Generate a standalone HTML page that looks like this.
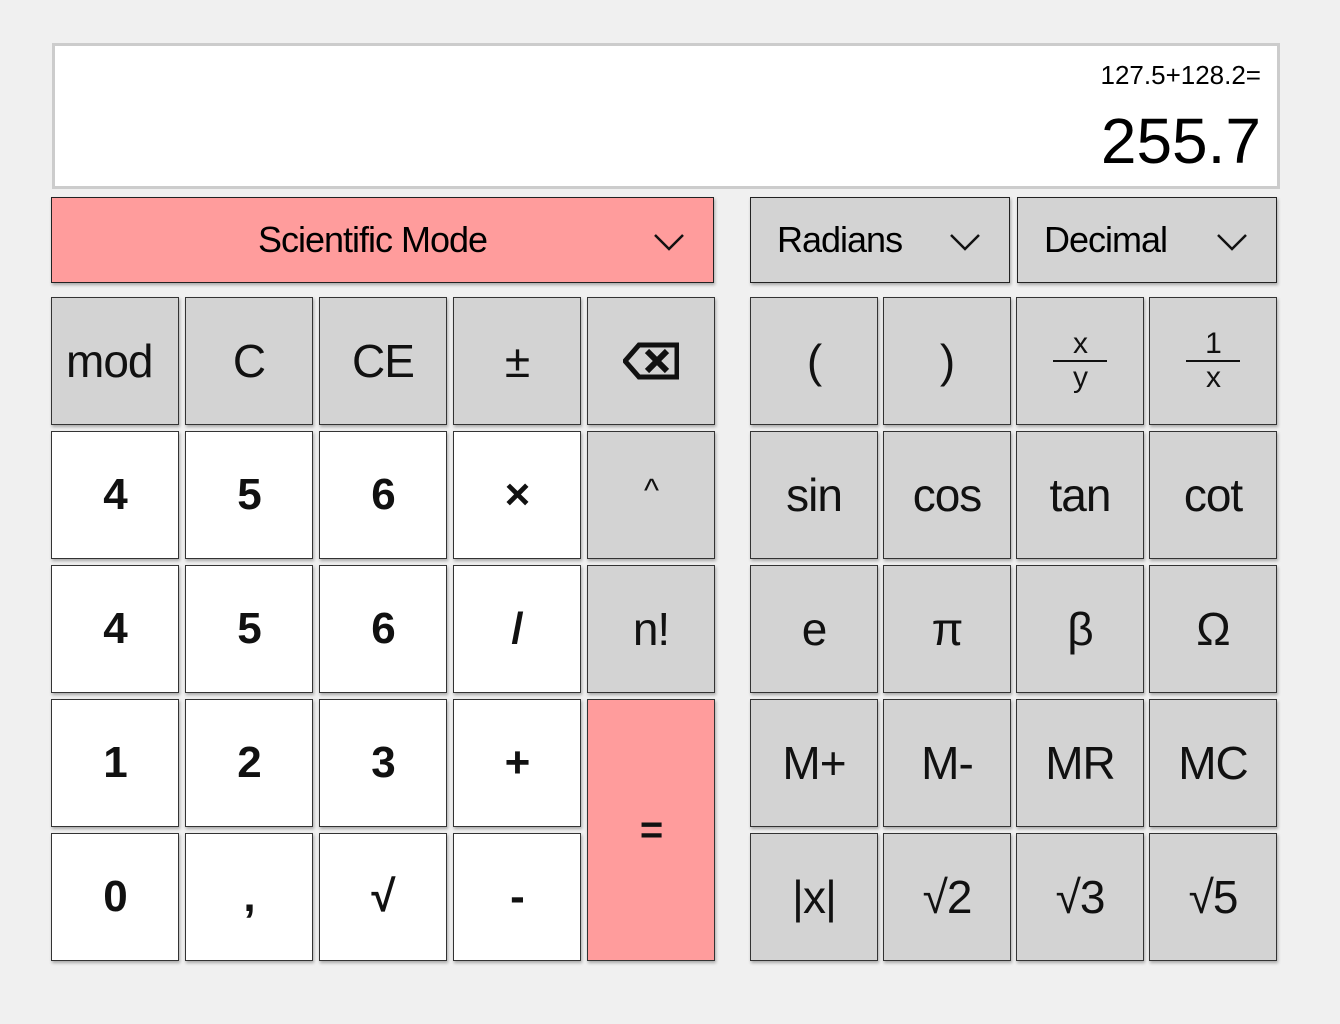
<!DOCTYPE html><html><head><style>
body{margin:0;width:1340px;height:1024px;background:#f0f0f0;font-family:"Liberation Sans",sans-serif;position:relative;overflow:hidden}
.d{position:absolute;left:52px;top:43px;width:1222px;height:140px;background:#fff;border:3px solid #ccc}
.b{position:absolute;width:126px;height:126px;border:1px solid #333;background:#d3d3d3;box-shadow:1px 2px 3px rgba(0,0,0,.3);display:flex;align-items:center;justify-content:center;font-size:46px;color:#111;box-sizing:content-box;letter-spacing:-1px}
.w{background:#fff;font-weight:bold;font-size:44px}
.b.p,.dd.p{background:#ff9c9c}
.dd{position:absolute;top:197px;height:86px;border:1px solid #222;background:#d3d3d3;box-shadow:1px 2px 3px rgba(0,0,0,.3);font-size:36px;display:flex;align-items:center;letter-spacing:-1px}
.dd svg{position:absolute;right:28px;top:35px}
.f{display:flex;flex-direction:column;align-items:center;font-size:30px;line-height:32px}
.f span{border-top:2px solid #111;width:54px;text-align:center}
</style></head><body>
<div class="d"><div style="position:absolute;right:16px;top:14px;font-size:26px">127.5+128.2=</div><div style="position:absolute;right:16px;top:58px;font-size:64px">255.7</div></div>
<div class="dd p" style="left:51px;width:663px;justify-content:center;padding-right:20px;box-sizing:border-box">Scientific Mode<svg width="32" height="18"><path d="M2 2L16 16L30 2" stroke="#111" stroke-width="2.5" fill="none"/></svg></div>
<div class="dd" style="left:750px;width:260px;padding-left:26px;box-sizing:border-box">Radians<svg width="32" height="18"><path d="M2 2L16 16L30 2" stroke="#111" stroke-width="2.5" fill="none"/></svg></div>
<div class="dd" style="left:1017px;width:260px;padding-left:26px;box-sizing:border-box">Decimal<svg width="32" height="18"><path d="M2 2L16 16L30 2" stroke="#111" stroke-width="2.5" fill="none"/></svg></div>

<div class="b" style="left:51px;top:297px;justify-content:flex-start;padding-left:0"><span style="margin-left:14px">mod</span></div>
<div class="b" style="left:185px;top:297px">C</div>
<div class="b" style="left:319px;top:297px">CE</div>
<div class="b" style="left:453px;top:297px">±</div>
<div class="b" style="left:587px;top:297px"><svg width="56" height="38" viewBox="0 0 56 38"><path d="M2 19L16 3H54V35H16Z" stroke="#111" stroke-width="5" fill="none"/><path d="M24 9L44 29M44 9L24 29" stroke="#111" stroke-width="6"/></svg></div>

<div class="b w" style="left:51px;top:431px">4</div>
<div class="b w" style="left:185px;top:431px">5</div>
<div class="b w" style="left:319px;top:431px">6</div>
<div class="b w" style="left:453px;top:431px">×</div>
<div class="b" style="left:587px;top:431px;font-size:32px;align-items:flex-start"><span style="margin-top:40px">^</span></div>

<div class="b w" style="left:51px;top:565px">4</div>
<div class="b w" style="left:185px;top:565px">5</div>
<div class="b w" style="left:319px;top:565px">6</div>
<div class="b w" style="left:453px;top:565px">/</div>
<div class="b" style="left:587px;top:565px">n!</div>

<div class="b w" style="left:51px;top:699px">1</div>
<div class="b w" style="left:185px;top:699px">2</div>
<div class="b w" style="left:319px;top:699px">3</div>
<div class="b w" style="left:453px;top:699px">+</div>
<div class="b p" style="left:587px;top:699px;height:260px;font-weight:bold;font-size:40px">=</div>

<div class="b w" style="left:51px;top:833px">0</div>
<div class="b w" style="left:185px;top:833px">,</div>
<div class="b w" style="left:319px;top:833px">√</div>
<div class="b w" style="left:453px;top:833px">-</div>

<div class="b" style="left:750px;top:297px">(</div>
<div class="b" style="left:883px;top:297px">)</div>
<div class="b f" style="left:1016px;top:297px"><div>x</div><span>y</span></div>
<div class="b f" style="left:1149px;top:297px"><div>1</div><span>x</span></div>

<div class="b" style="left:750px;top:431px">sin</div>
<div class="b" style="left:883px;top:431px">cos</div>
<div class="b" style="left:1016px;top:431px">tan</div>
<div class="b" style="left:1149px;top:431px">cot</div>

<div class="b" style="left:750px;top:565px">e</div>
<div class="b" style="left:883px;top:565px">π</div>
<div class="b" style="left:1016px;top:565px">β</div>
<div class="b" style="left:1149px;top:565px">Ω</div>

<div class="b" style="left:750px;top:699px">M+</div>
<div class="b" style="left:883px;top:699px">M-</div>
<div class="b" style="left:1016px;top:699px">MR</div>
<div class="b" style="left:1149px;top:699px">MC</div>

<div class="b" style="left:750px;top:833px">|x|</div>
<div class="b" style="left:883px;top:833px">√2</div>
<div class="b" style="left:1016px;top:833px">√3</div>
<div class="b" style="left:1149px;top:833px">√5</div>
</body></html>
